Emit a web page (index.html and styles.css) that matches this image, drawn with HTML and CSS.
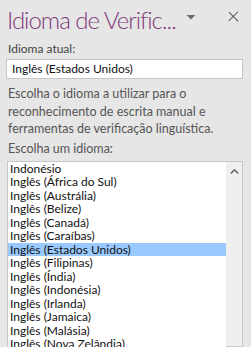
FILE: index.html
```html
<!DOCTYPE html>
<html lang="pt">
<head>
<meta charset="utf-8">
<link rel="stylesheet" href="styles.css">
</head>
<body>
<div class="pane">
  <header class="head">
    <h1 class="title">Idioma de Verific...</h1>
    <svg class="menu" width="10" height="5" viewBox="0 0 10 5"><path d="M0.5 0H9.5L5 4.5Z" fill="#6a6a6a"/></svg>
    <span class="xbtn" aria-label="Fechar"></span>
  </header>
  <div class="lbl">Idioma atual:</div>
  <div class="input">Inglês (Estados Unidos)</div>
  <p class="desc">Escolha o idioma a utilizar para o reconhecimento de escrita manual e ferramentas de verificação linguística.</p>
  <div class="lbl lbl2">Escolha um idioma:</div>
  <div class="list">
    <ul class="items">
      <li>Indonésio</li>
      <li>Inglês (África do Sul)</li>
      <li>Inglês (Austrália)</li>
      <li>Inglês (Belize)</li>
      <li>Inglês (Canadá)</li>
      <li>Inglês (Caraíbas)</li>
      <li class="sel">Inglês (Estados Unidos)</li>
      <li>Inglês (Filipinas)</li>
      <li>Inglês (Índia)</li>
      <li>Inglês (Indonésia)</li>
      <li>Inglês (Irlanda)</li>
      <li>Inglês (Jamaica)</li>
      <li>Inglês (Malásia)</li>
      <li>Inglês (Nova Zelândia)</li>
    </ul>
    <div class="scroll">
      <svg class="up" width="9" height="5" viewBox="0 0 9 5"><path d="M0.7 4.5L4.5 0.9L8.3 4.5" stroke="#606060" stroke-width="1.4" fill="none"/></svg>
      <div class="thumb"></div>
    </div>
  </div>
</div>
</body>
</html>
```
FILE: styles.css
```css
html, body {
  margin: 0;
  padding: 0;
  height: 347px;
  overflow: hidden;
  background: #e6e6e6;
}
.pane {
  font-family: Lato, "Noto Sans", sans-serif;
  color: #444;
  padding: 0 8px 0 6px;
}
.head {
  display: flex;
  align-items: center;
  height: 38px;
}
.title {
  margin: 0 0 0 1px;
  font-family: Lato, "Open Sans", sans-serif;
  font-weight: 300;
  font-size: 24px;
  letter-spacing: -1px;
  color: #80397b;
  flex: 1 1 0;
  min-width: 0;
  overflow: hidden;
  white-space: nowrap;
}
.menu {
  flex: none;
  display: block;
  margin-right: 31px;
  margin-top: -4px;
}
.xbtn {
  flex: none;
  display: grid;
  place-items: center;
  width: 10px;
  height: 10px;
  margin-right: 6px;
  margin-top: -5px;
}
.xbtn::before,
.xbtn::after {
  content: "";
  grid-area: 1 / 1;
  width: 12.5px;
  height: 1.3px;
  background: #555;
  transform: rotate(45deg);
}
.xbtn::after {
  transform: rotate(-45deg);
}
.lbl {
  font-size: 12px;
  line-height: 18px;
  height: 18px;
  padding-left: 2px;
  margin-top: 2px;
}
.input {
  margin-top: 1px;
  height: 18px;
  border: 1px solid #c6c6c6;
  background: #fff;
  font-size: 12px;
  line-height: 18px;
  color: #111;
  padding-left: 5px;
}
.desc {
  margin: 6px 0 0 2px;
  font-size: 12.5px;
  line-height: 17.5px;
  color: #555;
}
.lbl2 {
  margin-top: 2px;
  color: #555;
  font-size: 12.5px;
}
.list {
  margin: 3px 0 0 1px;
  height: 204px;
  border: 1px solid #c6c6c6;
  background: #fff;
  display: flex;
}
.items {
  list-style: none;
  margin: 0;
  padding: 0;
  flex: 1;
  font-size: 12px;
  color: #111;
}
.items li {
  height: 13.5px;
  line-height: 13.5px;
  padding-left: 2px;
  white-space: nowrap;
}
.items li.sel {
  background: #99c9ff;
}
.scroll {
  width: 16px;
  background: #efefef;
  display: flex;
  flex-direction: column;
  align-items: center;
}
.up {
  margin-top: 7px;
}
.thumb {
  margin-top: auto;
  width: 16px;
  height: 20px;
  background: #cdcdcd;
}
```
